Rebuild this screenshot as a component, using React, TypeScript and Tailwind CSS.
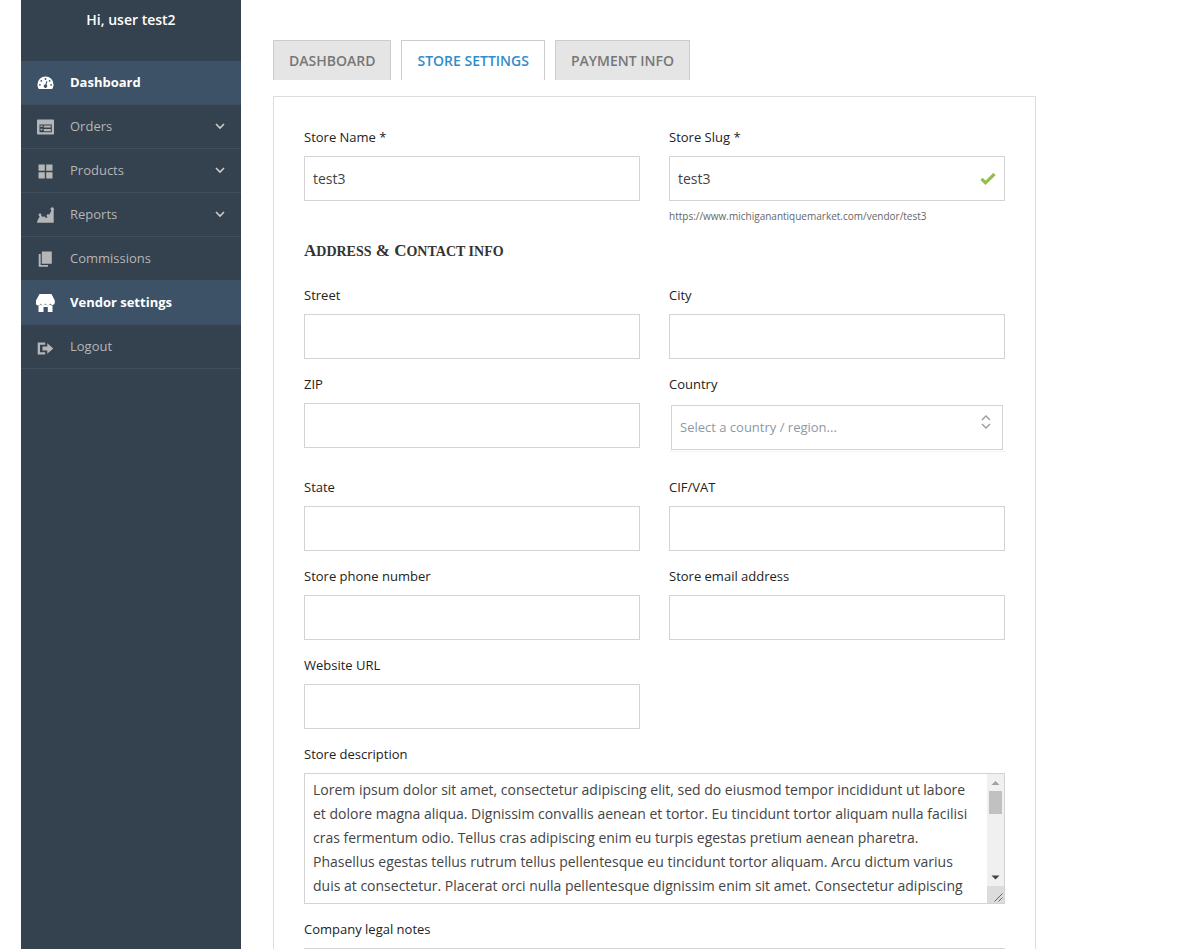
import type { ReactNode } from 'react'
import clsx from 'clsx'

interface MenuItem {
  label: string
  icon: ReactNode
  active?: boolean
  expandable?: boolean
}

const holes = '#3d5266'

const menu: MenuItem[] = [
  {
    label: 'Dashboard',
    active: true,
    icon: (
      <>
        <path d="M2.500 11.500a8 8 0 1 1 16 0c0 1.700-.5 3.200-1.300 4.500H3.800c-.8-1.300-1.300-2.800-1.300-4.500z" />
        <g fill={holes}>
          <circle cx="4.900" cy="11.800" r=".9" />
          <circle cx="6.300" cy="7.800" r=".9" />
          <circle cx="10.500" cy="6" r=".9" />
          <circle cx="14.600" cy="7.800" r=".9" />
          <circle cx="16.100" cy="11.800" r=".9" />
          <path d="M11.500 8l.9.3-.9 3.500a1.700 1.700 0 1 1-1.200-.3z" />
        </g>
      </>
    ),
  },
  {
    label: 'Orders',
    expandable: true,
    icon: (
      <path
        fillRule="evenodd"
        d="M2.800 2.500h15.400q.8 0 .8.8v13.400q0 .8-.8.8H2.800q-.8 0-.8-.8V3.300q0-.8.8-.8zM4.500 7.500h12.300v7.800H4.500zM5.500 8.500v1.500h2V8.500zM8.800 8.500v2h7v-2zM5.500 11.800v1.500h2v-1.500zM8.800 12v2.200h7V12z"
      />
    ),
  },
  {
    label: 'Products',
    expandable: true,
    icon: <path d="M3.500 3.500h6.300v6.300H3.500zM11.200 3.500h6.300v6.300h-6.300zM3.500 11.200h6.300v6.300H3.500zM11.200 11.200h6.300v6.300h-6.300z" />,
  },
  {
    label: 'Reports',
    expandable: true,
    icon: (
      <>
        <path d="M2 17.700l.5-2.200 3-5.500 4 3.500 3.500-1.500L17 4.500h1.700v13.200z" />
        <circle cx="5" cy="10" r="1.400" />
        <circle cx="9.200" cy="13" r="1.400" />
        <circle cx="13" cy="10.700" r="1.400" />
        <circle cx="17.200" cy="4" r="1.700" />
      </>
    ),
  },
  {
    label: 'Commissions',
    icon: <path d="M6.800 2.500h10v12.300h-10zM3.700 5h2v11H13v1.700H3.700z" />,
  },
  {
    label: 'Vendor settings',
    active: true,
    icon: (
      <>
        <path d="M4.500 1h12l3.300 6.500v2.300a2.400 2.400 0 0 1-4.600.7 2.500 2.500 0 0 1-4.700 0 2.500 2.500 0 0 1-4.700 0A2.400 2.400 0 0 1 1 9.800V7.500z" />
        <path d="M3.500 12.500q1.500.2 2.500-1 1.800 1.500 4.500 0 2.500 1.500 4.500 0 1 1.200 2.500 1V19h-4.700v-5H8.500v5h-5z" />
      </>
    ),
  },
  {
    label: 'Logout',
    icon: (
      <path d="M2.700 5.500h7.500v2.300H5v7.400h5.200v2.300H2.700zM7.500 9.500h4.800V6.300l6 5.200-6 5.200v-3.200H7.500z" />
    ),
  },
]

const tabs = ['Dashboard', 'Store settings', 'Payment info']

const description =
  'Lorem ipsum dolor sit amet, consectetur adipiscing elit, sed do eiusmod tempor incididunt ut labore et dolore magna aliqua. Dignissim convallis aenean et tortor. Eu tincidunt tortor aliquam nulla facilisi cras fermentum odio. Tellus cras adipiscing enim eu turpis egestas pretium aenean pharetra. Phasellus egestas tellus rutrum tellus pellentesque eu tincidunt tortor aliquam. Arcu dictum varius duis at consectetur. Placerat orci nulla pellentesque dignissim enim sit amet. Consectetur adipiscing'

const Sidebar = () => (
  <aside className="w-[220px] shrink-0 bg-[#34414e]">
    <p className="h-[61px] pt-2 text-center text-sm leading-6 font-semibold text-white">
      Hi, user test2
    </p>
    <nav>
      {menu.map(({ label, icon, active, expandable }) => (
        <a
          key={label}
          href="#"
          className={clsx(
            'flex h-11 items-center gap-[15px] border-b border-[#3d4f60] pr-4 pl-3.5 text-[13px]',
            active ? 'bg-[#3d5266] font-bold text-white' : 'text-[#b4b6b8]',
          )}
        >
          <svg viewBox="0 0 20 20" className="h-5 w-5 fill-current" aria-hidden="true">
            {icon}
          </svg>
          <span className="flex-1">{label}</span>
          {expandable && (
            <svg viewBox="0 0 10 8" className="h-2 w-2.5" fill="none" aria-hidden="true">
              <path d="M1 1l4 4 4-4" stroke="#ccc" strokeWidth="1.600" />
            </svg>
          )}
        </a>
      ))}
    </nav>
  </aside>
)

interface FieldProps {
  id: string
  label: string
  value?: string
  valid?: boolean
  hint?: string
}

const Field = ({ id, label, value, valid, hint }: FieldProps) => (
  <div>
    <label htmlFor={id} className="mb-[7px] block text-[13px] leading-6">
      {label}
    </label>
    <div className="flex h-[45px] items-center border border-[#d3d3d3]">
      <input
        id={id}
        type="text"
        defaultValue={value}
        className="h-full min-w-0 flex-1 px-2 text-sm text-[#444] outline-none"
      />
      {valid && (
        <svg viewBox="0 0 16 14" className="mr-2 h-3.5 w-4" aria-hidden="true">
          <path d="M1.500 6.800l4 4L14.500 2" fill="none" stroke="#93bf4c" strokeWidth="3.200" />
        </svg>
      )}
    </div>
    {hint && <p className="mt-[7px] text-[10px] leading-4 text-[#666]">{hint}</p>}
  </div>
)

const CountryField = () => (
  <div>
    <label htmlFor="country" className="mb-[7px] block text-[13px] leading-6">
      Country
    </label>
    <div className="mb-2.5 border-b border-[#f3f3f3] px-0.5 pt-0.5 pb-px">
      <div className="relative">
        <select
          id="country"
          className="h-[45px] w-full appearance-none border border-[#d3d3d3] bg-white px-2 text-[13px] text-[#8e98a4]"
        >
          <option>Select a country / region...</option>
        </select>
        <svg
          viewBox="0 0 10 14"
          className="pointer-events-none absolute top-2.5 right-3 h-3.5 w-2.5"
          fill="none"
          stroke="#999"
          aria-hidden="true"
        >
          <path d="M1 5l4-4 4 4M1 9l4 4 4-4" strokeWidth="1.300" />
        </svg>
      </div>
    </div>
  </div>
)

const Scrollbar = () => (
  <div className="flex w-[17px] flex-col items-center bg-[#f0f0f0]" aria-hidden="true">
    <svg viewBox="0 0 17 17" className="h-[17px] w-[17px]">
      <path d="M4.500 11l4-4 4 4z" fill="#a0a0a0" />
    </svg>
    <div className="h-[23px] w-[13px] bg-[#c1c1c1]" />
    <svg viewBox="0 0 17 17" className="mt-auto h-[17px] w-[17px]">
      <path d="M4.500 6.500l4 4 4-4z" fill="#444" />
    </svg>
    <svg viewBox="0 0 17 17" className="h-[17px] w-[17px] bg-[#dcdcdc]">
      <path d="M7.500 15.500l8-8M11.500 15.500l4-4" stroke="#666" />
    </svg>
  </div>
)

const TextArea = ({ id, label, value }: FieldProps) => (
  <div className="col-span-2">
    <label htmlFor={id} className="mb-[7px] block text-[13px] leading-6">
      {label}
    </label>
    <div className="flex h-[131px] border border-[#d3d3d3]">
      <textarea
        id={id}
        defaultValue={value}
        className="min-w-0 flex-1 resize-none overflow-hidden px-2 pt-1 text-sm leading-6 text-[#444] outline-none"
      />
      <Scrollbar />
    </div>
  </div>
)

export default function App() {
  return (
    <div className="flex h-screen bg-white pl-[21px] font-['Open_Sans',sans-serif] text-[#222]">
      <Sidebar />
      <main className="min-w-0 flex-1 overflow-y-auto pt-10 pr-40 pl-8">
        <div className="flex gap-2.5">
          {tabs.map((tab) => (
            <button
              key={tab}
              type="button"
              className={clsx(
                'h-10 border border-b-0 border-[#ccc] px-[15px] text-sm font-semibold uppercase',
                tab === 'Store settings' ? 'bg-white text-[#308dcb]' : 'bg-[#e5e5e5] text-[#777]',
              )}
            >
              {tab}
            </button>
          ))}
        </div>
        <form className="mt-4 grid grid-cols-2 gap-x-[29px] gap-y-[13px] border border-[#ddd] px-[30px] pt-7 pb-7">
          <Field id="store-name" label="Store Name *" value="test3" />
          <Field
            id="store-slug"
            label="Store Slug *"
            value="test3"
            valid
            hint="https://www.michiganantiquemarket.com/vendor/test3"
          />
          <h2 className="col-span-2 mt-0.5 mb-[7px] font-['Liberation_Serif',serif] text-[17px] leading-6 font-bold text-[#333]">
            A<span className="text-sm uppercase">ddress</span> &amp; C
            <span className="text-sm uppercase">ontact info</span>
          </h2>
          <Field id="street" label="Street" />
          <Field id="city" label="City" />
          <Field id="zip" label="ZIP" />
          <CountryField />
          <Field id="state" label="State" />
          <Field id="vat" label="CIF/VAT" />
          <Field id="phone" label="Store phone number" />
          <Field id="email" label="Store email address" />
          <Field id="website" label="Website URL" />
          <TextArea id="description" label="Store description" value={description} />
          <TextArea id="legal-notes" label="Company legal notes" />
        </form>
      </main>
    </div>
  )
}
